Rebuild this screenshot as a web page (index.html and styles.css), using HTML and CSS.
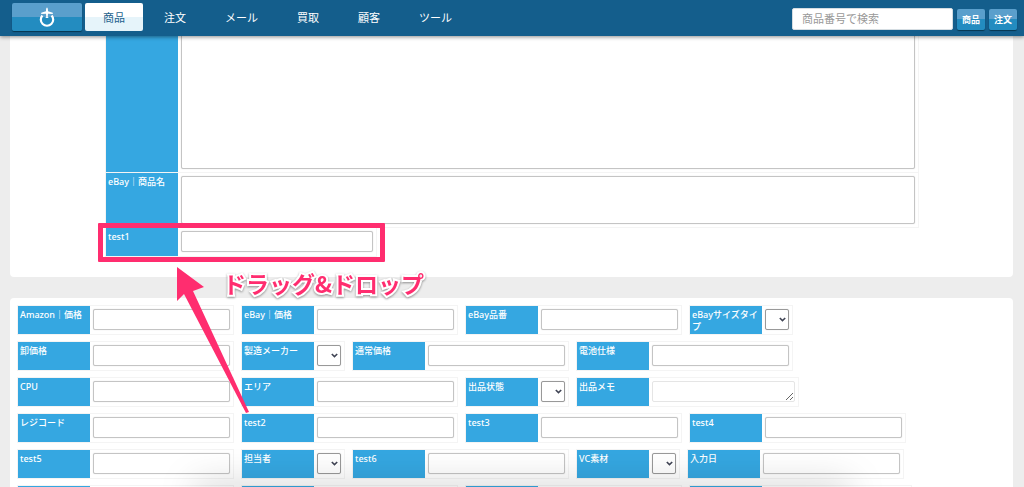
FILE: index.html
```html
<!DOCTYPE html>
<html lang="ja">
<head>
<meta charset="utf-8">
<meta name="viewport" content="width=device-width, initial-scale=1">
<title>商品</title>
<link rel="stylesheet" href="styles.css">
</head>
<body>
<header class="topbar">
  <button class="logo" type="button" aria-label="ホーム">
    <svg width="18" height="20" viewBox="0 0 18 20" aria-hidden="true">
      <path d="M4.4 8.4A6.2 6.2 0 1 0 13.6 8.4" fill="none" stroke="#fff" stroke-width="2.2"/>
      <path d="M9 0.5C9.9 1.2 10 2.4 10 4.2L14.8 5.8V7L10 6.8L9.7 10L10.8 11H7.2L8.3 10L8 6.8L3.2 7V5.8L8 4.2C8 2.4 8.1 1.2 9 0.5Z" fill="#fff"/>
    </svg>
  </button>
  <nav class="nav">
    <a class="tab active" href="#">商品</a>
    <a class="tab" href="#">注文</a>
    <a class="tab" href="#">メール</a>
    <a class="tab" href="#">買取</a>
    <a class="tab" href="#">顧客</a>
    <a class="tab" href="#">ツール</a>
  </nav>
  <form class="search">
    <input class="search-box" type="text" placeholder="商品番号で検索" aria-label="商品番号で検索">
    <button class="search-button" type="button">商品</button>
    <button class="search-button" type="button">注文</button>
  </form>
</header>
<main class="page">
  <section class="panel main-panel">
    <div class="stack">
      <div class="field wide"><label class="label" for="desc"></label><textarea class="control tall" id="desc"></textarea></div>
      <div class="field wide"><label class="label" for="ebay-name">eBay｜商品名</label><textarea class="control medium" id="ebay-name"></textarea></div>
      <div class="field"><label class="label" for="test1">test1</label><input class="control long" id="test1" type="text"></div>
    </div>
  </section>
  <section class="panel pool">
    <div class="row">
      <div class="field"><label class="label" for="f1">Amazon｜価格</label><input class="control" id="f1" type="text"></div>
      <div class="field"><label class="label" for="f2">eBay｜価格</label><input class="control" id="f2" type="text"></div>
      <div class="field"><label class="label" for="f3">eBay品番</label><input class="control" id="f3" type="text"></div>
      <div class="field"><label class="label" for="f4">eBayサイズタイプ</label><select class="control pick" id="f4"><option></option></select></div>
    </div>
    <div class="row">
      <div class="field"><label class="label" for="f5">卸価格</label><input class="control" id="f5" type="text"></div>
      <div class="field"><label class="label" for="f6">製造メーカー</label><select class="control pick" id="f6"><option></option></select></div>
      <div class="field"><label class="label" for="f7">通常価格</label><input class="control" id="f7" type="text"></div>
      <div class="field"><label class="label" for="f8">電池仕様</label><input class="control" id="f8" type="text"></div>
    </div>
    <div class="row">
      <div class="field"><label class="label" for="f9">CPU</label><input class="control" id="f9" type="text"></div>
      <div class="field"><label class="label" for="f10">エリア</label><input class="control" id="f10" type="text"></div>
      <div class="field"><label class="label" for="f11">出品状態</label><select class="control pick" id="f11"><option></option></select></div>
      <div class="field"><label class="label" for="f12">出品メモ</label><textarea class="control memo" id="f12"></textarea></div>
    </div>
    <div class="row">
      <div class="field"><label class="label" for="f13">レジコード</label><input class="control" id="f13" type="text"></div>
      <div class="field"><label class="label" for="f14">test2</label><input class="control" id="f14" type="text"></div>
      <div class="field"><label class="label" for="f15">test3</label><input class="control" id="f15" type="text"></div>
      <div class="field"><label class="label" for="f16">test4</label><input class="control" id="f16" type="text"></div>
    </div>
    <div class="row">
      <div class="field"><label class="label" for="f17">test5</label><input class="control" id="f17" type="text"></div>
      <div class="field"><label class="label" for="f18">担当者</label><select class="control pick" id="f18"><option></option></select></div>
      <div class="field"><label class="label" for="f19">test6</label><input class="control" id="f19" type="text"></div>
      <div class="field"><label class="label" for="f20">VC素材</label><select class="control pick" id="f20"><option></option></select></div>
      <div class="field"><label class="label" for="f21">入力日</label><input class="control" id="f21" type="text"></div>
    </div>
    <div class="row">
      <div class="field"><label class="label" for="f22"></label><input class="control" id="f22" type="text"></div>
      <div class="field"><label class="label" for="f23"></label><input class="control" id="f23" type="text"></div>
      <div class="field"><label class="label" for="f24"></label><input class="control" id="f24" type="text"></div>
      <div class="field"><label class="label" for="f25"></label><textarea class="control memo" id="f25"></textarea></div>
    </div>
  </section>
</main>
<div class="highlight"></div>
<svg class="arrow" width="80" height="156" viewBox="0 0 80 156" aria-hidden="true">
  <path d="M4 4L31 24L20 28L76 149L73 150L11 31L4 38Z" fill="#ff2d6f"/>
</svg>
<div class="callout">ドラッグ&amp;ドロップ</div>
<div class="dock-shade"></div>
</body>
</html>
```

FILE: styles.css
```css
* { box-sizing: border-box; }

body {
  margin: 0;
  height: 100vh;
  overflow: hidden;
  position: relative;
  background: #ededed;
  font-family: "Noto Sans", "Noto Sans CJK JP", sans-serif;
  font-size: 9px;
  line-height: 12px;
}

.topbar {
  position: relative;
  z-index: 2;
  display: flex;
  align-items: flex-start;
  gap: 3px;
  height: 36px;
  padding: 3px 7px 0 12px;
  background: #145e8c;
  box-shadow: 0 1px 4px rgba(0, 0, 0, 0.45);
}

.logo,
.search-button {
  border: 0;
  border-radius: 2px;
  color: #fff;
  background: linear-gradient(#5a9fcc 50%, #238cc0 50%);
  box-shadow: 0 1px 1px #06364f;
}

.logo {
  display: flex;
  align-items: center;
  justify-content: center;
  width: 70px;
  height: 28px;
  padding: 0;
}

.nav {
  display: flex;
  gap: 3px;
}

.tab {
  height: 28px;
  padding: 0 18px;
  border-radius: 2px;
  color: #fff;
  font-size: 11px;
  line-height: 30px;
  text-decoration: none;
}

.tab.active {
  color: #1d628d;
  background: linear-gradient(#fff 50%, #e6f4fa 50%);
}

.search {
  display: flex;
  align-items: center;
  gap: 4px;
  margin: 4px 0 0 auto;
}

.search-box {
  width: 161px;
  height: 22px;
  padding: 0 9px;
  border: 1px solid #d5dde2;
  border-radius: 2px;
  background: #fff;
  font-family: inherit;
  font-size: 11px;
}

.search-box::placeholder { color: #999; }

.search-button {
  width: 28px;
  height: 21px;
  margin-top: 2px;
  padding: 0;
  font-family: inherit;
  font-size: 9px;
  font-weight: 700;
}

.page { padding: 0 11px 0 10px; }

.panel {
  border-radius: 4px;
  background: #fff;
}

.main-panel {
  margin-top: -20px;
  padding: 0 94px 20px 95px;
}

.stack {
  display: flex;
  flex-direction: column;
  align-items: flex-start;
}

.field {
  display: flex;
  border: 1px solid #f4f4f4;
}

.field.wide { width: 100%; }

.stack .field + .field { border-top: 0; }

.label {
  flex: none;
  width: 72px;
  min-height: 28px;
  padding: 3px 2px 0;
  color: #fff;
  background: #35a7e1;
  font-weight: 500;
}

.control {
  width: 137px;
  height: 21px;
  margin: 3px;
  padding: 0 2px;
  border: 1px solid #c4c4c4;
  border-radius: 2px;
  background: #fff;
  box-shadow: 0 0 1px #ccc;
}

.control.tall,
.control.medium {
  flex: 1;
  resize: none;
}

.control.tall { height: 149px; }
.control.medium { height: 48px; }
.control.long { width: 192px; }

.control.pick {
  appearance: none;
  width: 24px;
  border-color: #999;
  background: #fff url("data:image/svg+xml,%3Csvg xmlns='http://www.w3.org/2000/svg' width='7' height='5' viewBox='0 0 7 5'%3E%3Cpath d='M.8 1l2.7 2.6L6.2 1' fill='none' stroke='%23404454' stroke-width='1.6'/%3E%3C/svg%3E") no-repeat right 2px center;
}

.control.memo {
  width: 143px;
  border-color: #e5e5e5;
  box-shadow: none;
}

.pool {
  display: flex;
  flex-direction: column;
  gap: 6px;
  margin-top: 21px;
  padding: 7px;
}

.row {
  display: flex;
  gap: 7px;
}

.highlight {
  position: absolute;
  z-index: 1;
  top: 223px;
  left: 98px;
  width: 287px;
  height: 39px;
  border: 5px solid #ff2d6f;
  border-radius: 1px;
}

.arrow {
  position: absolute;
  z-index: 1;
  top: 263px;
  left: 173px;
}

.callout {
  position: absolute;
  z-index: 1;
  top: 268px;
  left: 223px;
  color: #ff2d6f;
  font-family: "Noto Sans CJK JP", sans-serif;
  font-size: 23px;
  font-weight: 700;
  line-height: 30px;
  white-space: nowrap;
  -webkit-text-stroke: 4px #fff;
  paint-order: stroke fill;
  filter: drop-shadow(0 1px 1px rgba(0, 0, 0, 0.4));
}

.dock-shade {
  position: absolute;
  z-index: 1;
  right: 17%;
  bottom: -12px;
  left: 19%;
  height: 10px;
  box-shadow: 0 0 36px rgba(0, 0, 0, 0.4);
  pointer-events: none;
}
```
